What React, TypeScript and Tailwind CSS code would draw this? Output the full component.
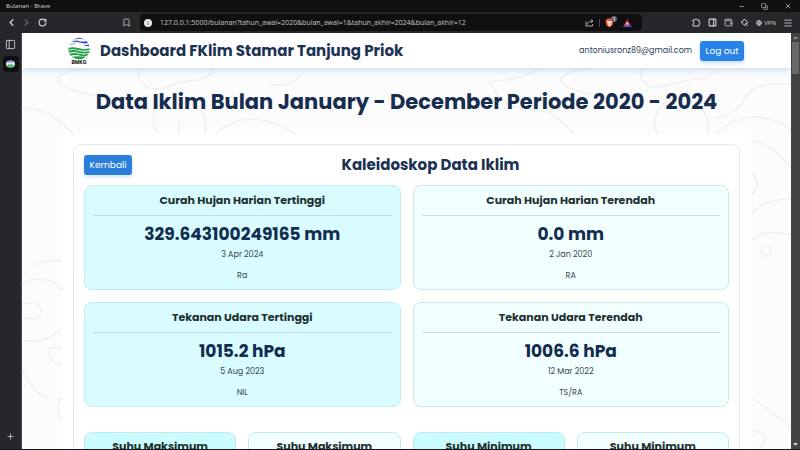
import type { ReactNode } from "react";
import {
  Bookmark,
  ChevronLeft,
  ChevronRight,
  Copy,
  Globe,
  Menu,
  Minus,
  PanelLeft,
  PanelRight,
  Plus,
  Puzzle,
  RotateCw,
  Wallet,
  X,
} from "lucide-react";

type Reading = { title: string; value: string; date: string; weather: string; high: boolean };

const readings: Reading[] = [
  { title: "Curah Hujan Harian Tertinggi", value: "329.643100249165 mm", date: "3 Apr 2024", weather: "Ra", high: true },
  { title: "Curah Hujan Harian Terendah", value: "0.0 mm", date: "2 Jan 2020", weather: "RA", high: false },
  { title: "Tekanan Udara Tertinggi", value: "1015.2 hPa", date: "5 Aug 2023", weather: "NIL", high: true },
  { title: "Tekanan Udara Terendah", value: "1006.6 hPa", date: "12 Mar 2022", weather: "TS/RA", high: false },
];

const temperatures = [
  { title: "Suhu Maksimum", high: true },
  { title: "Suhu Maksimum", high: false },
  { title: "Suhu Minimum", high: true },
  { title: "Suhu Minimum", high: false },
];

function IconButton({ label, children }: { label: string; children: ReactNode }) {
  return (
    <button type="button" aria-label={label} className="flex items-center justify-center">
      {children}
    </button>
  );
}

function TitleBar() {
  return (
    <div className="flex h-3 shrink-0 items-center justify-between bg-[#101012] pr-2 pl-1.5 text-[#d6d6d8]">
      <span className="text-[6px] leading-3">Bulanan - Brave</span>
      <div className="flex items-center gap-4">
        <IconButton label="Minimize"><Minus size={7} /></IconButton>
        <IconButton label="Restore"><Copy size={7} className="-scale-x-100 rotate-90" /></IconButton>
        <IconButton label="Close"><X size={8} /></IconButton>
      </div>
    </div>
  );
}

function BraveLion() {
  return (
    <span className="relative flex">
      <svg width="9" height="10" viewBox="0 0 18 20">
        <path d="M5 1h8l3 3 1 4-2 7-6 4-6-4-2-7 1-4z" fill="#f4572c" />
        <path d="M4 6l3 1 2-1 2 1 3-1-1 4-2 2 1 2-3 2-3-2 1-2-2-2z" fill="#fff" />
        <path d="M7 10l2 1 2-1-2 3z" fill="#f4572c" />
      </svg>
      <span className="absolute -top-0.5 left-1.5 h-1.5 w-1.5 rounded-full bg-[#66666e] text-center text-[5px] leading-[6px] text-white">1</span>
    </span>
  );
}

function BatTriangle() {
  return (
    <svg width="9" height="8" viewBox="0 0 18 16">
      <path d="M9 0L0 16l9-5z" fill="#ff4724" />
      <path d="M9 0l9 16-9-5z" fill="#9e1f63" />
      <path d="M0 16h18l-9-6z" fill="#5b4fd0" />
      <path d="M9 6l3 5H6z" fill="#fff" />
    </svg>
  );
}

function ToolBar() {
  return (
    <div className="flex h-[21px] shrink-0 items-center bg-[#26262b] pr-[7px] pl-1.5 text-[#d0d0d4]">
      <div className="flex w-[116px] items-center gap-1">
        <IconButton label="Back"><ChevronLeft size={11} strokeWidth={3} /></IconButton>
        <span className="flex text-[#606067]"><ChevronRight size={11} strokeWidth={3} /></span>
        <span className="pl-0.5"><IconButton label="Reload"><RotateCw size={9} strokeWidth={3} /></IconButton></span>
      </div>
      <div className="flex w-[18px] items-center"><IconButton label="Bookmark"><Bookmark size={9} /></IconButton></div>
      <div className="flex h-[17px] min-w-0 flex-1 items-center rounded bg-[#101012] pr-2.5 pl-1">
        <svg width="8" height="8" viewBox="0 0 16 16" className="mr-2 shrink-0">
          <circle cx="8" cy="8" r="8" fill="#e6e6e8" />
          <path d="M7 7h2v5H7zM7 4h2v2H7z" fill="#777" />
        </svg>
        <input
          aria-label="Address"
          readOnly
          value="127.0.0.1:5000/bulanan?tahun_awal=2020&bulan_awal=1&tahun_akhir=2024&bulan_akhir=12"
          className="min-w-0 flex-1 bg-transparent text-[7px] leading-4 text-[#c4c4c7] outline-none"
        />
        <div className="flex items-center gap-[5px]">
          <IconButton label="Share">
            <svg width="9" height="8" viewBox="0 0 18 16" fill="none" stroke="#a8a8ad" strokeWidth="2">
              <path d="M2 5v9h13v-4M5 11C5 6 9 4 16 4M12 1l4 3-4 4" />
            </svg>
          </IconButton>
          <span className="h-2 w-px bg-[#4a4a50]" />
          <IconButton label="Shields"><BraveLion /></IconButton>
          <span className="pl-1"><IconButton label="Rewards"><BatTriangle /></IconButton></span>
        </div>
      </div>
      <div className="ml-[50px] flex items-center gap-[7px]">
        <IconButton label="Extensions">
          <svg width="9" height="9" viewBox="0 0 18 18" fill="none" stroke="currentColor" strokeWidth="2" strokeLinejoin="round">
            <path d="M2 4h4a2 2 0 0 1 4 0h4v4a2 2 0 0 1 0 4v4H2v-4a2 2 0 0 0 0-4z" />
          </svg>
        </IconButton>
        <IconButton label="Sidebar"><PanelRight size={9} strokeWidth={3} /></IconButton>
        <IconButton label="Wallet"><Wallet size={9} /></IconButton>
        <IconButton label="Leo">
          <svg width="9" height="9" viewBox="0 0 18 18" fill="none" stroke="currentColor" strokeWidth="2" strokeLinejoin="round">
            <path d="M9 2l3 4 4 3-2 2h-3v3l-2 1-3-4-4-3 4-2zM13 13l3 3" />
          </svg>
        </IconButton>
        <button type="button" className="flex items-center gap-0.5 text-[6px] leading-3">
          <Globe size={6} strokeWidth={3} />VPN
        </button>
        <IconButton label="Menu"><Menu size={10} /></IconButton>
      </div>
    </div>
  );
}

function SideBar() {
  return (
    <div className="flex w-[22px] shrink-0 flex-col items-center border-r border-[#4c4c50] bg-[#26262b] pt-1.5 pb-2 text-[#d0d0d4]">
      <IconButton label="Toggle tabs"><PanelLeft size={11} /></IconButton>
      <button type="button" aria-label="Bulanan" className="mt-1.5 flex h-4 w-4 items-center justify-center rounded bg-[#101012]">
        <svg width="9" height="8" viewBox="0 0 18 16">
          <ellipse cx="9" cy="8" rx="9" ry="7" fill="#e9eef8" />
          <path d="M2 5q7-8 14 0z" fill="#7d92dd" />
          <path d="M1 10q8-3 16 0-8 10-16 0z" fill="#4fbf6d" />
        </svg>
      </button>
      <span className="mt-auto"><IconButton label="New tab"><Plus size={9} /></IconButton></span>
    </div>
  );
}

function Contours() {
  return (
    <svg
      aria-hidden="true"
      viewBox="22 33 769 416"
      preserveAspectRatio="xMidYMin slice"
      className="absolute inset-0 h-full w-full"
      fill="none"
      stroke="#f0f0f1"
      strokeWidth="1.5"
    >
      <path d="M92 66C82 72 62 69 58 79C57 89 88 93 120 103" />
      <path d="M139 66C134 78 144 89 156 89C172 88 176 80 199 80C208 78 212 72 216 66" />
      <path d="M22 108C52 109 55 119 75 135" />
      <path d="M160 135C146 120 155 99 175 98C197 95 209 117 205 135" />
      <path d="M215 135C235 115 260 113 297 135M301 75C293 85 285 86 270 85M179 121v12" />
      <path d="M595 66C585 72 565 69 561 79C560 89 591 93 623 103" />
      <path d="M642 66C637 78 645 87 656 87C674 86 679 79 702 79C711 77 715 72 719 66" />
      <path d="M540 69C525 78 510 79 490 82C496 96 510 110 530 109C556 111 560 122 576 135" />
      <path d="M658 135C650 118 658 101 676 99C699 95 712 117 707 135" />
      <path d="M791 84C741 82 751 98 736 109Q727 116 714 118M714 135C738 113 765 112 791 129" />
      <path d="M750 141C770 141 773 151 791 167M750 170C759 178 759 190 750 196" />
      <path d="M751 214C761 202 775 199 791 199M750 241C766 228 773 234 791 234" />
      <circle cx="766" cy="251" r="5" />
      <path d="M750 396L791 427M750 431C768 430 768 442 758 450" />
      <path d="M32 265C42 260 50 261 63 261M22 284C37 275 54 279 63 291" />
      <path d="M22 341C42 343 55 336 63 326M22 318C50 323 45 298 22 304" />
      <path d="M63 348H49C48 359 54 364 63 365M22 370C32 385 37 397 49 397M63 397C56 402 56 413 63 420" />
    </svg>
  );
}

function BmkgLogo() {
  return (
    <svg width="22" height="28" viewBox="0 0 66 84" role="img" aria-label="BMKG">
      <g fill="#2f4fd0">
        <path d="M17 8Q33-4 49 8Q41 5 33 5T17 8z" />
        <path d="M8 17Q18 8 29 11Q43 16 56 12L60 18Q47 21 32 16Q19 12 8 17z" />
        <path d="M4 25Q14 17 25 20Q16 21 4 25z" />
        <path d="M44 23Q55 26 62 22L64 28Q54 28 44 23z" />
      </g>
      <g fill="#22a045">
        <path d="M1 32Q18 29 33 34Q49 39 65 34V39Q48 44 31 39Q17 35 1 38z" />
        <path d="M1 41Q18 37 33 42Q48 47 65 42L63 48Q47 52 31 47Q17 43 3 47z" />
        <path d="M4 50Q20 46 33 50Q46 54 61 51L57 57Q44 60 31 55Q20 52 8 56z" />
        <path d="M11 59Q32 56 54 60Q33 74 11 59z" />
      </g>
      <text x="33" y="82" textAnchor="middle" fontSize="15" fontWeight="700" fill="#222">BMKG</text>
    </svg>
  );
}

function ReadingCard({ title, value, date, weather, high }: Reading) {
  return (
    <article
      className={`rounded-lg border border-[#c8eaec] px-2 pb-[7px] text-center ${high ? "bg-[#d8fcff]" : "bg-[#f2ffff]"}`}
    >
      <h3 className="border-b border-[#c5dee1] pt-1.5 pb-1.5 text-[11px] leading-[17px] font-bold text-[#20302f]">{title}</h3>
      <p className="pt-1.5 text-[17px] leading-6 font-bold text-[#122d4f]">{value}</p>
      <p className="pt-[3px] text-[8px] leading-3 text-[#35484d]">{date}</p>
      <p className="pt-[9px] text-[8px] leading-3 text-[#35484d]">{weather}</p>
    </article>
  );
}

function ScrollBar() {
  return (
    <div aria-hidden="true" className="flex w-[9px] shrink-0 flex-col items-center bg-[#424242] text-[#d0d0d0]">
      <svg width="5" height="9" viewBox="0 0 5 9"><path d="M2.500 3L5 6H0z" fill="#8b8b8b" /></svg>
      <div className="h-8 w-[7px] bg-[#686868]" />
      <svg width="5" height="9" viewBox="0 0 5 9" className="mt-auto"><path d="M0 3h5L2.500 6z" fill="currentColor" /></svg>
    </div>
  );
}

function Page() {
  return (
    <div className="relative flex min-w-0 flex-1 flex-col overflow-hidden bg-[#fcfcfc] font-[Poppins,Inter,sans-serif]">
      <Contours />
      <header className="relative flex h-[35px] shrink-0 items-center bg-white pr-[47px] pl-[46px] shadow-[0_1px_8px_#b9d4e8]">
        <BmkgLogo />
        <h1 className="ml-2.5 text-[15px] leading-6 font-bold text-[#1b3353]">Dashboard FKlim Stamar Tanjung Priok</h1>
        <span className="ml-auto text-[8px] leading-4 text-[#2d4059]">antoniusronz89@gmail.com</span>
        <button type="button" className="ml-2 h-5 w-11 rounded-[3px] bg-[#2982e6] text-[9px] leading-5 text-white shadow-[0_2px_4px_#c5dcf5]">
          Log out
        </button>
      </header>
      <main className="relative flex flex-col">
        <h2 className="flex h-[66px] items-center justify-center pt-px text-[21px] leading-8 font-bold text-[#162d50]">
          Data Iklim Bulan January - December Periode 2020 - 2024
        </h2>
        <div className="mx-10 bg-white px-[11px] pt-2.5">
          <section className="rounded-lg border border-[#e6e8e9] px-2.5 pt-2.5 pb-10">
            <div className="grid grid-cols-[48px_1fr] items-center">
              <button type="button" className="h-5 rounded-[3px] bg-[#2b7edc] text-[9px] leading-5 text-white shadow-[0_2px_4px_#d3e4f7]">
                Kembali
              </button>
              <h2 className="text-center text-[15px] leading-5 font-bold text-[#1a3153]">Kaleidoskop Data Iklim</h2>
            </div>
            <div className="mt-2.5 grid grid-cols-2 gap-3">
              {readings.map((r) => (
                <ReadingCard key={r.title} {...r} />
              ))}
            </div>
            <div className="mt-[25px] grid grid-cols-4 gap-3">
              {temperatures.map((t, i) => (
                <article
                  key={i}
                  className={`h-28 rounded-lg border border-[#c3e9eb] text-center ${t.high ? "bg-[#cbfcff]" : "bg-[#f2ffff]"}`}
                >
                  <h3 className="pt-[5px] text-[11px] leading-[17px] font-bold text-[#20302f]">{t.title}</h3>
                </article>
              ))}
            </div>
          </section>
        </div>
      </main>
    </div>
  );
}

export default function App() {
  return (
    <div className="flex h-screen flex-col overflow-hidden border-b border-[#18181a] font-['Open_Sans','Noto_Sans',sans-serif]">
      <TitleBar />
      <ToolBar />
      <div className="flex min-h-0 flex-1">
        <SideBar />
        <Page />
        <ScrollBar />
      </div>
    </div>
  );
}
